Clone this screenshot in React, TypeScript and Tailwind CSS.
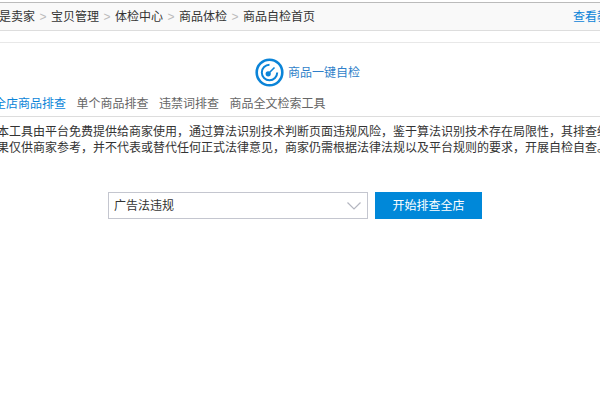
const crumbs = ['宝贝管理', '体检中心', '商品体检', '商品自检首页'];
const tabs = ['单个商品排查', '违禁词排查', '商品全文检索工具'];

function GaugeIcon() {
  return (
    <svg width="29" height="29" viewBox="0 0 29 29" fill="none" stroke="#0b84d8">
      <circle cx="14.5" cy="14.5" r="12.8" strokeWidth="2.6" />
      <path d="M14.5 6.8a7.7 7.7 0 1 0 7.7 7.7" strokeWidth="2" />
      <path d="M19.5 9.5l-5.5 5.5" strokeWidth="1.6" />
      <circle cx="13.2" cy="15.8" r="2.6" fill="#0b84d8" stroke="none" />
    </svg>
  );
}

export default function App() {
  return (
    <div className="h-[400px] w-[600px] overflow-hidden bg-white text-xs font-['Liberation_Sans','Noto_Sans_CJK_SC',sans-serif] text-[#333]">
      <div className="mt-[2px] flex h-[29px] items-center justify-between border-t border-b border-t-[#bbb] border-b-[#ddd] bg-[#f9f9f9]">
        <div className="-ml-[13px] flex items-center">
          <span>我是卖家</span>
          {crumbs.map((c) => (
            <div key={c} className="flex items-center">
              <span className="w-4 text-center text-[#bbb]">&gt;</span>
              <span>{c}</span>
            </div>
          ))}
        </div>
        <a className="-mr-[21px] shrink-0 text-[#0b84d8]">查看教程</a>
      </div>
      <div className="mt-[11px] border-t border-[#e8e8e8]">
        <div className="mt-[15px] flex items-center justify-center gap-[4px] pl-[15px]">
          <GaugeIcon />
          <span className="text-[#2f7fc9]">商品一键自检</span>
        </div>
      </div>
      <div className="mt-[9px] flex h-[21px] items-start gap-[10.5px] border-b border-[#ddd]">
        <span className="-ml-[6px] text-[#0b84d8]">全店商品排查</span>
        {tabs.map((t) => (
          <span key={t} className="text-[#666]">{t}</span>
        ))}
      </div>
      <div className="mt-[7px] -ml-[3px] w-[640px] leading-[16px]">
        <p className="whitespace-nowrap">本工具由平台免费提供给商家使用，通过算法识别技术判断页面违规风险，鉴于算法识别技术存在局限性，其排查结</p>
        <p className="whitespace-nowrap">果仅供商家参考，并不代表或替代任何正式法律意见，商家仍需根据法律法规以及平台规则的要求，开展自检自查。</p>
      </div>
      <div className="mt-[36px] ml-[108px] flex gap-[7px]">
        <div className="flex h-[27px] w-[260px] items-center justify-between border border-[#c4c6cf] pr-[6px] pl-[5px] text-[#333]">
          <span>广告法违规</span>
          <svg width="14" height="8" viewBox="0 0 14 8" fill="none" stroke="#b4b6c0" strokeWidth="1.2">
            <path d="M.5.5L7 7l6.5-6.5" />
          </svg>
        </div>
        <button className="h-[27px] w-[107px] bg-[#0088d9] text-white">开始排查全店</button>
      </div>
    </div>
  );
}
